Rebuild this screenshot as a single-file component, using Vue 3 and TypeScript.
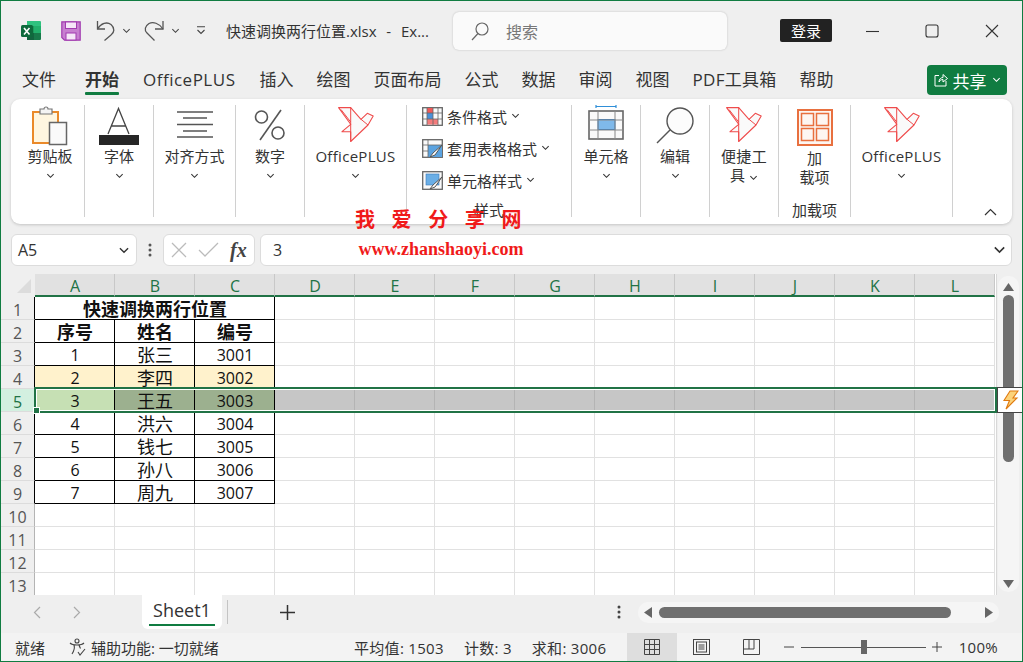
<script setup lang="ts">
const tabs = ['文件', '开始', 'OfficePLUS', '插入', '绘图', '页面布局', '公式', '数据', '审阅', '视图', 'PDF工具箱', '帮助']
const cols = ['A', 'B', 'C', 'D', 'E', 'F', 'G', 'H', 'I', 'J', 'K', 'L']
const rowNums = [1, 2, 3, 4, 5, 6, 7, 8, 9, 10, 11, 12, 13]

const table: string[][] = [
  ['序号', '姓名', '编号'],
  ['1', '张三', '3001'],
  ['2', '李四', '3002'],
  ['3', '王五', '3003'],
  ['4', '洪六', '3004'],
  ['5', '钱七', '3005'],
  ['6', '孙八', '3006'],
  ['7', '周九', '3007']
]

// row 1 is the merged title, so data starts on row 2
function cellText(row: number, col: number) {
  if (row < 2 || row > 9 || col > 2) return ''
  return table[row - 2][col]
}

function cellClass(row: number, col: number) {
  return {
    boxed: row <= 9 && col <= 2,
    head: row === 2 && col <= 2,
    cjk: col === 1 || row === 2,
    warm: row === 4 && col <= 2,
    fa: row === 5 && col === 0,
    fb: row === 5 && (col === 1 || col === 2),
    fc: row === 5 && col > 2
  }
}

const stats = ['平均值: 1503', '计数: 3', '求和: 3006']
</script>

<template>
  <div class="window">
    <svg class="sprite" width="0" height="0">
      <defs>
        <symbol id="chev" viewBox="0 0 10 6">
          <path d="M1.5 1 5 4.5 8.5 1" fill="none" stroke="currentColor" stroke-width="1.2" />
        </symbol>
        <symbol id="bird" viewBox="0 0 36 36">
          <path d="M.6.6H12.700L23 12.300 29.300 6.300 35.200 9 30 18 12.700 34.500V24.700H4L12.700 17.300Z" fill="#fafafa" stroke="#ef4b4b" stroke-width="1.100" stroke-linejoin="round" />
          <path d="M12.700.6V34.500M23 12.300 30 18M3 2.500 12.700 15" fill="none" stroke="#ef4b4b" stroke-width="1" />
        </symbol>
      </defs>
    </svg>

    <header class="titlebar">
      <div class="quick">
        <svg class="logo" width="21" height="21" viewBox="0 0 21 21">
          <path d="M6 1h13a1 1 0 0 1 1 1v4H6z" fill="#2fc27f" />
          <rect x="6" y="6" width="7" height="7" fill="#1c9c5c" />
          <rect x="13" y="6" width="7" height="7" fill="#22b06b" />
          <rect x="6" y="13" width="7" height="7" fill="#13653f" />
          <path d="M13 13h7v6a1 1 0 0 1-1 1h-6z" fill="#187a4a" />
          <rect x="0" y="5" width="12" height="12" rx="1.500" fill="#0e6a3c" />
          <path d="M3 8l5.500 6.500M8.500 8 3 14.500" stroke="#fff" stroke-width="1.600" />
        </svg>
        <svg class="save" width="20" height="20" viewBox="0 0 20 20">
          <path d="M.8.8h18.400v18.400H3.500L.8 16.500Z" fill="#c77fd0" stroke="#a23bb0" stroke-width="1.200" />
          <rect x="4.500" y="1" width="11" height="6.500" fill="#f6e6f8" stroke="#a23bb0" />
          <rect x="5" y="12" width="10" height="7" fill="#f6e6f8" stroke="#a23bb0" />
        </svg>
        <svg class="undo" width="20" height="21" viewBox="0 0 20 21" fill="none" stroke="#555" stroke-width="1.300">
          <path d="M1.500 1V9H9" />
          <path d="M1.500 9C5 3 11 1.500 15 4.500 19 8 18.500 12.500 15 15L8.500 20.500" />
        </svg>
        <svg class="small-chev" width="9" height="6"><use href="#chev" /></svg>
        <svg class="redo" width="21" height="21" viewBox="0 0 21 21" fill="none" stroke="#555" stroke-width="1.300">
          <path d="M19 1V9H11" />
          <path d="M19 9C15 3 9 1.500 5 3.500 1 6 0 10 3 13L10.500 20.500" />
        </svg>
        <svg class="small-chev" width="9" height="6"><use href="#chev" /></svg>
        <svg class="customize" width="10" height="9" viewBox="0 0 10 9" fill="none" stroke="#444" stroke-width="1.100">
          <path d="M1 .8H9M1.500 4 5 7.500 8.500 4" />
        </svg>
        <span class="filename">快速调换两行位置.xlsx&nbsp; - &nbsp;Ex...</span>
      </div>
      <div class="search">
        <svg width="18" height="19" viewBox="0 0 18 19" fill="none" stroke="#666" stroke-width="1.200">
          <circle cx="11" cy="7" r="6" />
          <path d="M7 11.500 1 18" />
        </svg>
        <span>搜索</span>
      </div>
      <button class="login">登录</button>
      <div class="winbtn"><svg width="14" height="14" fill="none" stroke="#333" stroke-width="1.100"><path d="M1 7.500H14" /></svg></div>
      <div class="winbtn"><svg width="14" height="14" fill="none" stroke="#333" stroke-width="1.100"><rect x="1" y="1" width="12" height="12" rx="2" /></svg></div>
      <div class="winbtn"><svg width="14" height="14" fill="none" stroke="#333" stroke-width="1.100"><path d="M1 1 13 13M13 1 1 13" /></svg></div>
    </header>

    <nav class="menubar">
      <span
        v-for="t in tabs"
        :key="t"
        class="tab"
        :class="{ active: t === '开始', wide: t === 'OfficePLUS', pdf: t === 'PDF工具箱' }"
      >{{ t }}</span>
      <button class="share">
        <svg width="14" height="14" viewBox="0 0 14 14" fill="none" stroke="#fff" stroke-width="1">
          <path d="M5 2.500H1V13H12V8" />
          <path d="M5 9C5 6 7 4.500 9 4.500V1.500L13.500 5.500 9 9V6.500C7 6.500 6 7.500 5 9Z" />
        </svg>
        <span>共享</span>
        <svg width="9" height="6"><use href="#chev" /></svg>
      </button>
    </nav>

    <section class="ribbon">
      <div class="group first">
        <svg class="big" width="36" height="42" viewBox="0 0 36 42" fill="none">
          <rect x="1" y="7" width="25" height="31" fill="#fff6e0" stroke="#ea8a2a" stroke-width="2" />
          <path d="M8 7V4h4a2 2 0 0 1 4 0h4v5H8Z" fill="#f4f4f4" stroke="#777" stroke-width="1.200" />
          <rect x="17.500" y="17.500" width="17" height="22" fill="#fafafa" stroke="#666" stroke-width="1.500" />
        </svg>
        <span class="label">剪贴板</span>
        <svg class="drop" width="9" height="6"><use href="#chev" /></svg>
      </div>
      <div class="group w69">
        <svg class="big" width="40" height="42" viewBox="0 0 40 42" fill="none">
          <path d="M9 29 19.500 3.500 30 29M12.500 21H26.500" stroke="#444" stroke-width="1.300" />
          <rect x="0" y="30" width="40" height="10" fill="#262626" />
        </svg>
        <span class="label">字体</span>
        <svg class="drop" width="9" height="6"><use href="#chev" /></svg>
      </div>
      <div class="group w82">
        <svg class="big" width="36" height="42" viewBox="0 0 36 42" fill="none" stroke="#555" stroke-width="1.300">
          <path d="M0 7H36M6 13H30M0 19.500H36M6 26H30M0 32H36" />
        </svg>
        <span class="label">对齐方式</span>
        <svg class="drop" width="9" height="6"><use href="#chev" /></svg>
      </div>
      <div class="group w69">
        <svg class="big" width="34" height="42" viewBox="0 0 34 42" fill="none" stroke="#555" stroke-width="1.600">
          <circle cx="8.500" cy="12" r="6" />
          <circle cx="25" cy="28" r="6" />
          <path d="M28 5 7 35" />
        </svg>
        <span class="label">数字</span>
        <svg class="drop" width="9" height="6"><use href="#chev" /></svg>
      </div>
      <div class="group w102">
        <svg class="big bird" width="36" height="36"><use href="#bird" /></svg>
        <span class="label latin">OfficePLUS</span>
        <svg class="drop" width="9" height="6"><use href="#chev" /></svg>
      </div>

      <div class="group styles">
        <div class="style-row">
          <svg width="21" height="19" viewBox="0 0 21 19" fill="none">
            <rect x=".7" y=".7" width="19.600" height="17.600" fill="#fafafa" stroke="#666" stroke-width="1.300" />
            <rect x="5" y="1" width="6" height="5" fill="#f05a5a" />
            <rect x="5" y="6" width="6" height="6" fill="#4a90d9" />
            <rect x="5" y="12" width="11" height="5.500" fill="#f47c7c" />
            <path d="M5 1V18M11 1V18M16 1V18M1 6H20M1 12H20" stroke="#666" stroke-width=".8" />
          </svg>
          <span>条件格式</span>
          <svg width="9" height="6"><use href="#chev" /></svg>
        </div>
        <div class="style-row">
          <svg width="21" height="19" viewBox="0 0 21 19" fill="none">
            <rect x=".7" y=".7" width="19.600" height="17.600" fill="#fafafa" stroke="#666" stroke-width="1.300" />
            <rect x="6" y="6" width="14" height="12" fill="#5ba3e0" />
            <path d="M6 1V18M1 6H20M1 12H6" stroke="#666" stroke-width=".8" />
            <path d="M20 6 11 14 8 18 13 16Z" fill="#fff" stroke="#555" stroke-width="1" />
          </svg>
          <span>套用表格格式</span>
          <svg width="9" height="6"><use href="#chev" /></svg>
        </div>
        <div class="style-row">
          <svg width="21" height="19" viewBox="0 0 21 19" fill="none">
            <rect x=".7" y=".7" width="19.600" height="17.600" fill="#fafafa" stroke="#666" stroke-width="1.300" />
            <rect x="4" y="3" width="13" height="11" fill="#6aaee6" stroke="#3a78b8" stroke-width=".6" />
            <path d="M20 6 11 14 8 18 13 16Z" fill="#fff" stroke="#555" stroke-width="1" />
          </svg>
          <span>单元格样式</span>
          <svg width="9" height="6"><use href="#chev" /></svg>
        </div>
        <span class="title">样式</span>
      </div>

      <div class="group w69">
        <svg class="big" width="36" height="42" viewBox="0 0 36 42" fill="none">
          <path d="M8 1.500H28M8 0V3M28 0V3" stroke="#2f8fd8" stroke-width="1.200" />
          <rect x="1" y="6" width="34" height="28" fill="#fafafa" stroke="#666" stroke-width="1.600" />
          <rect x="10" y="14.500" width="17" height="10" fill="#7fb9ea" stroke="#2f7fc8" stroke-width="1" />
          <path d="M10 6V34M27 6V34M1 15H35M1 25H35" stroke="#888" stroke-width="1" />
        </svg>
        <span class="label">单元格</span>
        <svg class="drop" width="9" height="6"><use href="#chev" /></svg>
      </div>
      <div class="group w69">
        <svg class="big" width="38" height="42" viewBox="0 0 38 42" fill="none" stroke="#555">
          <circle cx="24" cy="16" r="13" stroke-width="1.400" fill="#fcfcfc" />
          <path d="M14 25 1 38" stroke-width="1.400" />
        </svg>
        <span class="label">编辑</span>
        <svg class="drop" width="9" height="6"><use href="#chev" /></svg>
      </div>
      <div class="group w69">
        <svg class="big bird" width="36" height="36"><use href="#bird" /></svg>
        <span class="label latin">便捷工</span>
        <span class="label">具 <svg width="9" height="6"><use href="#chev" /></svg></span>
      </div>
      <div class="group w72">
        <svg class="big" width="36" height="42" viewBox="0 0 36 42" fill="none" stroke="#e8703f" stroke-width="1.500">
          <rect x="1" y="5" width="34" height="35" stroke-width="2" fill="#fdf6f2" />
          <rect x="4.500" y="8.500" width="12" height="12" />
          <rect x="19.500" y="8.500" width="12" height="12" />
          <rect x="4.500" y="23.500" width="12" height="12" />
          <rect x="19.500" y="23.500" width="12" height="12" />
        </svg>
        <span class="label addin">加</span>
        <span class="label">载项</span>
        <span class="title">加载项</span>
      </div>
      <div class="group w102">
        <svg class="big bird" width="36" height="36"><use href="#bird" /></svg>
        <span class="label latin">OfficePLUS</span>
        <svg class="drop" width="9" height="6"><use href="#chev" /></svg>
      </div>
      <svg class="collapse" width="13" height="8" viewBox="0 0 13 8" fill="none" stroke="#333" stroke-width="1.200">
        <path d="M1 7 6.500 1.500 12 7" />
      </svg>
    </section>

    <section class="formula">
      <div class="namebox">
        <span>A5</span>
        <svg width="12" height="7" viewBox="0 0 10 6"><use href="#chev" /></svg>
      </div>
      <svg class="vdots" width="4" height="14"><circle cx="2" cy="2" r="1.500" fill="#555" /><circle cx="2" cy="7" r="1.500" fill="#555" /><circle cx="2" cy="12" r="1.500" fill="#555" /></svg>
      <div class="fxbox">
        <svg width="16" height="16" fill="none" stroke="#bbb" stroke-width="1.300"><path d="M1 1 15 15M15 1 1 15" /></svg>
        <svg width="21" height="16" fill="none" stroke="#bbb" stroke-width="1.300"><path d="M1 8 7 14 20 1" /></svg>
        <i>fx</i>
      </div>
      <div class="input">
        <span>3</span>
        <svg width="15" height="8" viewBox="0 0 10 6"><use href="#chev" /></svg>
      </div>
    </section>

    <section class="sheet">
      <div class="grid">
        <div class="corner"><span></span></div>
        <div v-for="c in cols" :key="c" class="colhead">{{ c }}</div>
        <template v-for="r in rowNums" :key="r">
          <div class="rowhead" :class="{ sel: r === 5, edge: r <= 9 && r !== 5 }">{{ r }}</div>
          <div v-if="r === 1" class="cell boxed head merged">快速调换两行位置</div>
          <template v-for="(c, i) in cols" :key="c">
            <div v-if="r !== 1 || i > 2" class="cell" :class="cellClass(r, i)">{{ cellText(r, i) }}</div>
          </template>
        </template>
      </div>
      <div class="vscroll">
        <div class="track">
          <svg width="11" height="8"><path d="M5.500 0 11 8H0Z" fill="#666" /></svg>
          <div class="vthumb"></div>
          <svg width="11" height="8"><path d="M5.500 8 11 0H0Z" fill="#666" /></svg>
        </div>
      </div>
      <!-- selection over row 5 -->
      <div class="selection"><span class="handle"></span></div>
      <div class="flash">
        <svg width="16" height="20" viewBox="0 0 16 20">
          <path d="M7 1H15L10 8H14L3 19 6.500 10.500H1Z" fill="#fcd37a" stroke="#e07a10" stroke-width="1.100" />
        </svg>
      </div>
    </section>

    <section class="sheettabs">
      <svg class="nav" width="8" height="13" fill="none" stroke="#aaa" stroke-width="1.200"><path d="M7 1 1.500 6.500 7 12" /></svg>
      <svg class="nav" width="8" height="13" fill="none" stroke="#aaa" stroke-width="1.200"><path d="M1 1 6.500 6.500 1 12" /></svg>
      <div class="sheettab"><span>Sheet1</span></div>
      <span class="tabsep"></span>
      <svg class="plus" width="15" height="15" fill="none" stroke="#333" stroke-width="1.500"><path d="M7.500 0V15M0 7.500H15" /></svg>
      <svg class="dots" width="4" height="14"><circle cx="2" cy="2" r="1.500" fill="#444" /><circle cx="2" cy="7" r="1.500" fill="#444" /><circle cx="2" cy="12" r="1.500" fill="#444" /></svg>
      <div class="hscroll">
        <svg width="8" height="11"><path d="M0 5.500 8 0V11Z" fill="#666" /></svg>
        <div class="hthumb"></div>
        <svg width="8" height="11"><path d="M8 5.500 0 0V11Z" fill="#666" /></svg>
      </div>
    </section>

    <footer class="status">
      <span class="ready">就绪</span>
      <svg class="access" width="17" height="18" viewBox="0 0 17 18" fill="none" stroke="#444" stroke-width="1.100">
        <circle cx="8" cy="3" r="2" />
        <path d="M1 5C3 7 5 7 8 7 11 7 13 7 15 5M5 7C6 10 5 13 3 16M9 14 11 17 16 11M10 7C10.500 8.500 11 9.500 11.500 10.500" />
      </svg>
      <span class="access-text">辅助功能: 一切就绪</span>
      <span v-for="s in stats" :key="s" class="stat">{{ s }}</span>
      <div class="view on">
        <svg width="16" height="16" fill="none" stroke="#444" stroke-width="1"><path d="M.5.5H15.500V15.500H.5ZM5.500.5V15.500M10.500.5V15.500M.5 5.500H15.500M.5 10.500H15.500" /></svg>
      </div>
      <div class="view">
        <svg width="17" height="16" fill="none" stroke="#444" stroke-width="1"><rect x=".5" y=".5" width="16" height="15" /><rect x="3.500" y="3" width="10" height="10" /><path d="M5.500 6H11.500M5.500 8H11.500M5.500 10H11.500" /></svg>
      </div>
      <div class="view">
        <svg width="17" height="16" fill="none" stroke="#444" stroke-width="1"><path d="M.5.5H16.500V15.500H.5ZM.5 10H11V.5M6 .5V10" /></svg>
      </div>
      <svg class="zoom-minus" width="10" height="2"><path d="M0 1H10" stroke="#444" /></svg>
      <div class="slider"><span></span></div>
      <svg class="zoom-plus" width="10" height="10"><path d="M0 5H10M5 0V10" stroke="#444" /></svg>
      <span class="percent">100%</span>
    </footer>

    <!-- site watermark pasted over the picture -->
    <div class="watermark">
      <div class="wm-cn">我爱分享网</div>
      <div class="wm-url">www.zhanshaoyi.com</div>
    </div>
  </div>
</template>

<style>
html,
body {
  margin: 0;
  background: #efefef;
}
</style>

<style scoped>
.window {
  position: relative;
  box-sizing: border-box;
  width: 1023px;
  height: 662px;
  overflow: hidden;
  border: 1px solid #107c41;
  background: #efefef;
  display: flex;
  flex-direction: column;
  font-family: 'Open Sans', 'Noto Sans CJK SC', sans-serif;
  color: #333;
}

.sprite {
  position: absolute;
}

/* title bar */
.titlebar {
  height: 59px;
  flex: none;
  display: flex;
  align-items: center;
}
.quick {
  width: 452px;
  display: flex;
  align-items: center;
}
.logo {
  margin-left: 20px;
}
.save {
  margin-left: 19px;
}
.undo {
  margin-left: 15px;
}
.small-chev {
  margin-left: 6px;
  color: #444;
}
.redo {
  margin-left: 13px;
}
.customize {
  margin-left: 16px;
}
.filename {
  margin-left: 20px;
  margin-top: -1px;
  font-size: 15px;
  word-spacing: 1px;
  white-space: nowrap;
}
.search {
  box-sizing: border-box;
  width: 274px;
  height: 38px;
  margin-top: 1px;
  display: flex;
  align-items: center;
  gap: 17px;
  padding-left: 18px;
  background: #fafafa;
  border-radius: 6px;
  box-shadow: 0 0 2px #bbb;
  font-size: 16px;
  color: #777;
}
.login {
  margin-left: 53px;
  margin-right: 10px;
  width: 52px;
  height: 23px;
  border: 0;
  padding: 0;
  border-radius: 2px;
  background: #222;
  color: #fff;
  font: 15px 'Noto Sans CJK SC', sans-serif;
}
.winbtn {
  width: 60px;
  margin-top: 1px;
  display: flex;
  justify-content: center;
}

/* tabs */
.menubar {
  height: 37px;
  flex: none;
  display: flex;
  align-items: center;
  gap: 23px;
  padding-left: 21px;
  font-size: 17px;
}
.tab {
  position: relative;
  padding-top: 2px;
  line-height: 28px;
  white-space: nowrap;
}
.tab:first-child {
  margin-right: 6px;
}
.tab.wide {
  letter-spacing: 0.5px;
  margin-left: 1px;
  margin-right: 1px;
}
.tab.pdf {
  letter-spacing: 0.3px;
}
.tab.active {
  font-weight: 700;
}
.tab.active::after {
  content: '';
  position: absolute;
  left: 0;
  right: 0;
  bottom: -1px;
  height: 3px;
  border-radius: 1px;
  background: #107c41;
}
.share {
  margin-left: auto;
  margin-right: 15px;
  margin-top: 3px;
  width: 80px;
  height: 30px;
  border: 0;
  border-radius: 4px;
  background: #107c41;
  color: #fff;
  display: flex;
  align-items: center;
  justify-content: center;
  gap: 5px;
  font: 17px 'Noto Sans CJK SC', sans-serif;
  padding: 0;
}

/* ribbon */
.ribbon {
  position: relative;
  flex: none;
  margin: 2px 10px 0;
  height: 125px;
  box-sizing: border-box;
  padding-top: 6px;
  background: #fff;
  border-radius: 9px;
  box-shadow: 0 1px 3px #c4c4c4;
  display: flex;
  align-items: flex-start;
}
.group {
  position: relative;
  box-sizing: border-box;
  height: 112px;
  border-right: 1px solid #d0d0d0;
  display: flex;
  flex-direction: column;
  align-items: center;
  font-size: 15px;
}
.first {
  width: 74px;
  padding-left: 5px;
}
.w69 {
  width: 69px;
}
.w72 {
  width: 72px;
}
.w82 {
  width: 82px;
}
.w102 {
  width: 102px;
}
.big {
  flex: none;
}
.big.bird {
  margin-top: 2px;
}
.label {
  line-height: 19px;
  white-space: nowrap;
}
.label.latin {
  margin-top: 4px;
  letter-spacing: 0.3px;
}
.label.addin {
  margin-top: 2px;
}
.drop {
  margin-top: 7px;
}
.title {
  position: absolute;
  left: 0;
  right: 0;
  bottom: 0;
  height: 14px;
  line-height: 14px;
  text-align: center;
}
.styles {
  width: 165px;
  align-items: flex-start;
  padding-left: 15px;
}
.style-row {
  height: 32px;
  display: flex;
  align-items: center;
  gap: 4px;
  white-space: nowrap;
}
.style-row:first-child {
  margin-top: -5px;
}

.collapse {
  position: absolute;
  right: 15px;
  bottom: 8px;
}

/* formula bar */
.formula {
  flex: none;
  margin: 10px 10px 0;
  height: 32px;
  display: flex;
  align-items: stretch;
  font-size: 16px;
}
.namebox,
.fxbox,
.input {
  box-sizing: border-box;
  background: #fff;
  border: 1px solid #dcdcdc;
  border-radius: 6px;
  display: flex;
  align-items: center;
}
.namebox {
  width: 126px;
  padding: 0 6px;
  justify-content: space-between;
}
.vdots {
  align-self: center;
  margin: 0 11px;
}
.fxbox {
  width: 92px;
  padding-left: 7px;
  gap: 11px;
}
.fxbox i {
  font: italic 700 20px 'Liberation Serif', serif;
  color: #444;
}
.input {
  flex: 1;
  margin-left: 5px;
  padding: 0 4px 0 12px;
  justify-content: space-between;
}

/* sheet */
.sheet {
  position: relative;
  flex: none;
  margin-top: 8px;
  height: 321px;
  display: flex;
  overflow: hidden;
}
.grid {
  width: 995px;
  flex: none;
  display: grid;
  grid-template-columns: 34px repeat(12, 80px);
  grid-auto-rows: 23px;
  background: #fff;
  font-size: 16px;
}
.corner {
  background: #efefef;
  border-bottom: 2px solid transparent;
  position: relative;
}
.corner span {
  position: absolute;
  left: 16px;
  top: 5px;
  border-left: 14px solid transparent;
  border-bottom: 14px solid #dcdcdc;
}
.colhead {
  box-sizing: border-box;
  padding-left: 1px;
  background: #e1e1e1;
  border-right: 1px solid #c8c8c8;
  border-bottom: 2px solid #217346;
  color: #217346;
  text-align: center;
  line-height: 24px;
}
.rowhead {
  box-sizing: border-box;
  background: #efefef;
  border-right: 1px solid #b4b4b4;
  border-bottom: 1px solid #dcdcdc;
  color: #555;
  text-align: center;
  line-height: 27px;
}
.rowhead.edge {
  border-right-color: #000;
}
.rowhead.sel {
  background: #d3f0e0;
  color: #217346;
}
.cell {
  box-sizing: border-box;
  padding-left: 1px;
  border-right: 1px solid #e1e1e1;
  border-bottom: 1px solid #e1e1e1;
  color: #111;
  text-align: center;
  line-height: 25px;
  overflow: hidden;
  white-space: nowrap;
}
.cell.boxed {
  border-right-color: #000;
  border-bottom-color: #000;
}
.cell.cjk {
  font-size: 18px;
}
.cell.head {
  font-size: 18px;
  font-weight: 700;
}
.cell.merged {
  grid-column: span 3;
}
.cell.warm {
  background: #fff2cc;
}
.cell.fa {
  background: #c6e0b4;
}
.cell.fb {
  background: #9cb08f;
}
.cell.fc {
  background: #c6c6c6;
  border-right-color: #b4b4b4;
}
.selection {
  position: absolute;
  left: 33px;
  top: 113px;
  width: 963px;
  height: 26px;
  box-sizing: border-box;
  border: 2px solid #217346;
  box-shadow: inset 0 0 0 1px #fff;
}
.handle {
  position: absolute;
  left: -2px;
  bottom: -2px;
  width: 5px;
  height: 5px;
  background: #217346;
  outline: 1px solid #fff;
}
.flash {
  position: absolute;
  left: 996px;
  top: 113px;
  width: 27px;
  height: 26px;
  box-sizing: border-box;
  border: 1px solid #444;
  border-right: 0;
  background: #fff;
  display: flex;
  align-items: center;
  justify-content: center;
}
.vscroll {
  flex: 1;
  border-left: 1px solid #d8d8d8;
  padding-left: 1px;
}
.track {
  box-sizing: border-box;
  width: 21px;
  height: 316px;
  margin-top: 2px;
  border-radius: 10px;
  background: #f5f5f5;
  display: flex;
  flex-direction: column;
  align-items: center;
  padding-top: 7px;
}
.vthumb {
  width: 11px;
  height: 167px;
  margin: 4px 0 118px;
  border-radius: 6px;
  background: #6f6f6f;
}

/* sheet tabs */
.sheettabs {
  position: relative;
  flex: none;
  height: 38px;
  display: flex;
  align-items: center;
}
.nav {
  margin-top: -4px;
}
.nav:first-child {
  margin-left: 32px;
}
.nav + .nav {
  margin-left: 32px;
}
.sheettab {
  box-sizing: border-box;
  align-self: flex-start;
  margin-left: 61px;
  width: 80px;
  height: 34px;
  background: #fff;
  border-radius: 0 0 6px 6px;
  font-size: 18px;
  color: #333;
  display: flex;
  justify-content: center;
}
.sheettab span {
  height: 29px;
  line-height: 31px;
  padding: 0 4px;
  border-bottom: 2px solid #107c41;
}
.tabsep {
  margin: -4px 0 0 5px;
  width: 1px;
  height: 24px;
  background: #c4c4c4;
}
.plus {
  margin: -4px 0 0 52px;
}
.dots {
  margin: -4px 0 0 322px;
}
.hscroll {
  box-sizing: border-box;
  margin: -4px 0 0 17px;
  width: 361px;
  height: 21px;
  border-radius: 10px;
  background: #f5f5f5;
  display: flex;
  align-items: center;
  padding: 0 6px;
}
.hthumb {
  flex: none;
  width: 292px;
  height: 11px;
  margin: 0 34px 0 7px;
  border-radius: 6px;
  background: #6f6f6f;
}

/* status bar */
.status {
  flex: 1;
  display: flex;
  align-items: center;
  padding-right: 24px;
  background: #f3f3f3;
  font-size: 15px;
  white-space: nowrap;
}
.ready {
  margin-left: 14px;
}
.access {
  margin-left: 24px;
}
.access-text {
  margin-left: 5px;
  width: 263px;
}
.stat {
  margin-right: 20px;
  letter-spacing: 0.3px;
}
.view {
  width: 50px;
  height: 100%;
  display: flex;
  align-items: center;
  justify-content: center;
}
.view.on {
  margin-left: auto;
  background: #dedede;
}
.zoom-minus {
  margin-left: 7px;
}
.slider {
  position: relative;
  margin-left: 7px;
  width: 125px;
  height: 1px;
  background: #555;
}
.slider span {
  position: absolute;
  left: 60px;
  top: -7px;
  width: 6px;
  height: 14px;
  background: #666;
}
.zoom-plus {
  margin-left: 6px;
}
.percent {
  margin-left: 17px;
  letter-spacing: 0.3px;
}

.watermark {
  position: absolute;
  left: 354px;
  top: 205px;
  width: 172px;
  pointer-events: none;
  color: #f01a1a;
  text-align: center;
}
.wm-cn {
  font: 700 20px/26px 'Noto Sans CJK SC', sans-serif;
  letter-spacing: 16.600px;
  white-space: nowrap;
  text-align: left;
}
.wm-url {
  margin-top: 4px;
  font: 700 18px/26px 'Liberation Serif', serif;
  white-space: nowrap;
}
</style>
